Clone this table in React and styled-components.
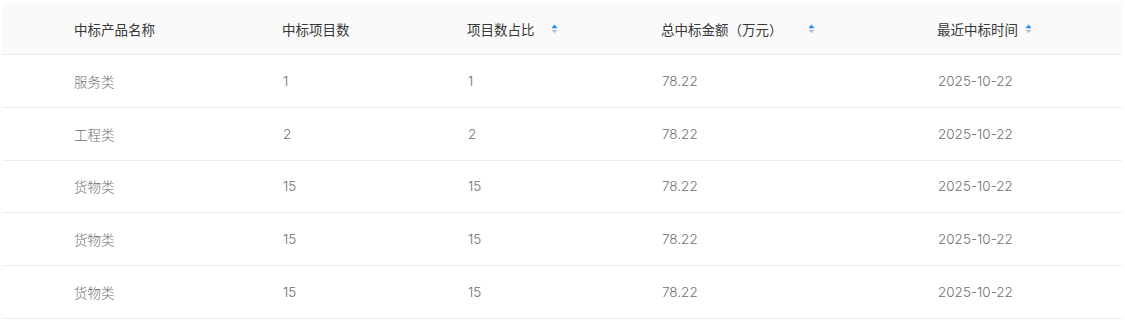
import React from "react";
import styled, { createGlobalStyle } from "styled-components";

const Global = createGlobalStyle`
  html, body { margin: 0; padding: 0; background: #fff; }
  body { font-family: Inter, "Noto Sans CJK SC", sans-serif; }
`;

const Wrap = styled.div`
  padding: 3px 3px 0 2px;
`;

const cols = "72px 208px 185px 194px 276px 1fr";

const HeaderRow = styled.div`
  display: grid;
  grid-template-columns: ${cols};
  align-items: center;
  height: 51px;
  background: #fafafa;
  border-bottom: 1px solid #ececec;
`;

const Row = styled.div`
  display: grid;
  grid-template-columns: ${cols};
  align-items: center;
  height: 51.75px;
  border-bottom: 1px solid #ececec;
`;

const HeadCell = styled.div`
  grid-column: ${(p) => p.$col};
  display: flex;
  align-items: center;
  font-size: 13.5px;
  color: #383838;
  font-weight: 400;
  white-space: nowrap;
`;

const Cell = styled.div`
  grid-column: ${(p) => p.$col};
  font-size: 13.5px;
  color: #707070;
  font-weight: 300;
  white-space: nowrap;
  padding-left: ${(p) => (p.$num ? 1 : 0)}px;
`;

const SortWrap = styled.span`
  display: inline-flex;
  margin-left: ${(p) => p.$gap}px;
`;

function SortIcon({ gap }) {
  return (
    <SortWrap $gap={gap}>
      <svg width="7" height="10" viewBox="0 0 7 10">
        <path d="M3.5 0.5 L6.5 4.2 L0.5 4.2 Z" fill="#1890ff" />
        <path d="M3.5 9.5 L6.5 5.8 L0.5 5.8 Z" fill="#c0c0c0" />
      </svg>
    </SortWrap>
  );
}

const headers = [
  { t: "中标产品名称" },
  { t: "中标项目数" },
  { t: "项目数占比", gap: 16 },
  { t: "总中标金额（万元）", gap: 25 },
  { t: "最近中标时间", gap: 7 },
];

const data = [
  ["服务类", "1", "1", "78.22", "2025-10-22"],
  ["工程类", "2", "2", "78.22", "2025-10-22"],
  ["货物类", "15", "15", "78.22", "2025-10-22"],
  ["货物类", "15", "15", "78.22", "2025-10-22"],
  ["货物类", "15", "15", "78.22", "2025-10-22"],
];

export default function App() {
  return (
    <>
      <Global />
      <Wrap>
        <HeaderRow>
          {headers.map((h, i) => (
            <HeadCell key={i} $col={i + 2}>
              {h.t}
              {h.gap !== undefined && <SortIcon gap={h.gap} />}
            </HeadCell>
          ))}
        </HeaderRow>
        {data.map((r, ri) => (
          <Row key={ri}>
            {r.map((c, ci) => (
              <Cell key={ci} $col={ci + 2} $num={ci > 0}>
                {c}
              </Cell>
            ))}
          </Row>
        ))}
      </Wrap>
    </>
  );
}
